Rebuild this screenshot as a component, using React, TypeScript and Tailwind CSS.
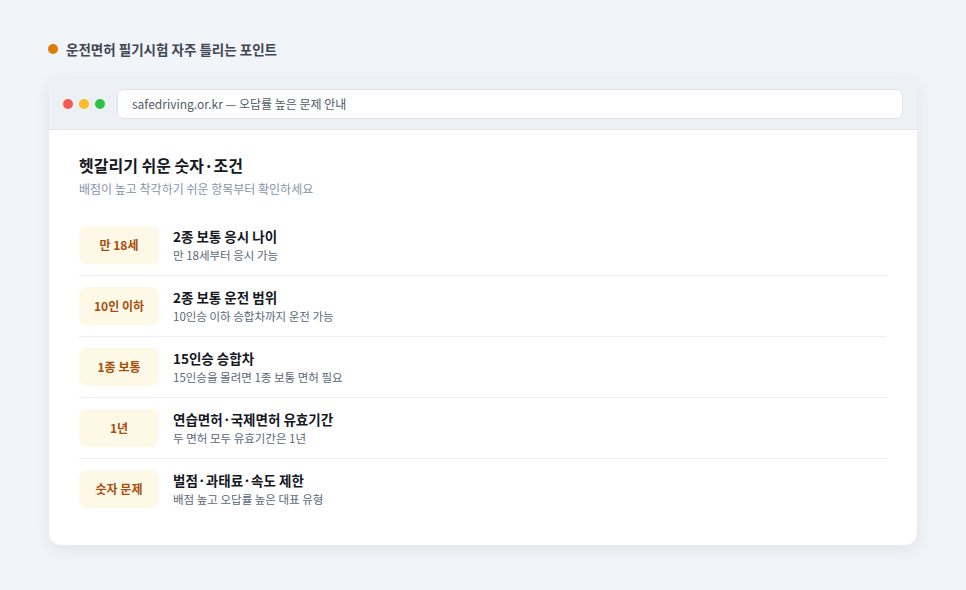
import React from 'react';

interface Item {
  badge: string;
  title: string;
  desc: string;
}

const items: Item[] = [
  { badge: '만 18세', title: '2종 보통 응시 나이', desc: '만 18세부터 응시 가능' },
  { badge: '10인 이하', title: '2종 보통 운전 범위', desc: '10인승 이하 승합차까지 운전 가능' },
  { badge: '1종 보통', title: '15인승 승합차', desc: '15인승을 몰려면 1종 보통 면허 필요' },
  { badge: '1년', title: '연습면허·국제면허 유효기간', desc: '두 면허 모두 유효기간은 1년' },
  { badge: '숫자 문제', title: '벌점·과태료·속도 제한', desc: '배점 높고 오답률 높은 대표 유형' },
];

const App: React.FC = () => {
  return (
    <div
      className="w-[966px] h-[590px] bg-[#f1f4f8] pt-[39px] px-[49px]"
      style={{ fontFamily: '"Noto Sans CJK KR", "Noto Sans", sans-serif' }}
    >
      <div className="flex items-center gap-[8px] h-[20px] -ml-[1px]">
        <span className="w-[10px] h-[10px] rounded-full bg-[#dd7a0e]" />
        <span className="text-[13.5px] font-bold text-[#3f4752]">운전면허 필기시험 자주 틀리는 포인트</span>
      </div>

      <div className="mt-[19px] w-[868px] bg-white rounded-[12px] overflow-hidden shadow-[0_4px_18px_rgba(30,45,70,0.08)]">
        <div className="h-[52px] bg-[#edf0f4] border-b border-[#e2e6eb] flex items-center pl-[14px] pr-[14px] gap-[6px]">
          <span className="w-[10px] h-[10px] rounded-full bg-[#f25c54]" />
          <span className="w-[10px] h-[10px] rounded-full bg-[#f9bd2b]" />
          <span className="w-[10px] h-[10px] rounded-full bg-[#2fc148]" />
          <div className="ml-[6px] flex-1 h-[30px] bg-white rounded-[7px] border border-[#e1e5ea] flex items-center px-[14px] text-[12px] text-[#4f5b6b]">
            safedriving.or.kr — 오답률 높은 문제 안내
          </div>
        </div>

        <div className="pt-[23px] pb-[26px] px-[30px]">
          <h1 className="text-[16px] font-bold text-[#15191f] leading-[24px]">헷갈리기 쉬운 숫자·조건</h1>
          <p className="mt-[3px] text-[12px] text-[#8395a9] leading-[18px]">배점이 높고 착각하기 쉬운 항목부터 확인하세요</p>

          <div className="mt-[17px]">
            {items.map((item, i) => (
              <div
                key={item.badge}
                className={`flex items-center gap-[14px] py-[11px] ${i < items.length - 1 ? 'border-b border-[#eceff3]' : ''}`}
              >
                <div className="w-[80px] h-[38px] shrink-0 rounded-[8px] bg-[#fef8e7] flex items-center justify-center text-[12px] font-bold text-[#a64f0c]">
                  {item.badge}
                </div>
                <div className="flex flex-col">
                  <span className="text-[13.5px] font-bold text-[#15191f] leading-[20px]">{item.title}</span>
                  <span className="text-[11.5px] text-[#5b6778] leading-[18px]">{item.desc}</span>
                </div>
              </div>
            ))}
          </div>
        </div>
      </div>
    </div>
  );
};

export default App;
